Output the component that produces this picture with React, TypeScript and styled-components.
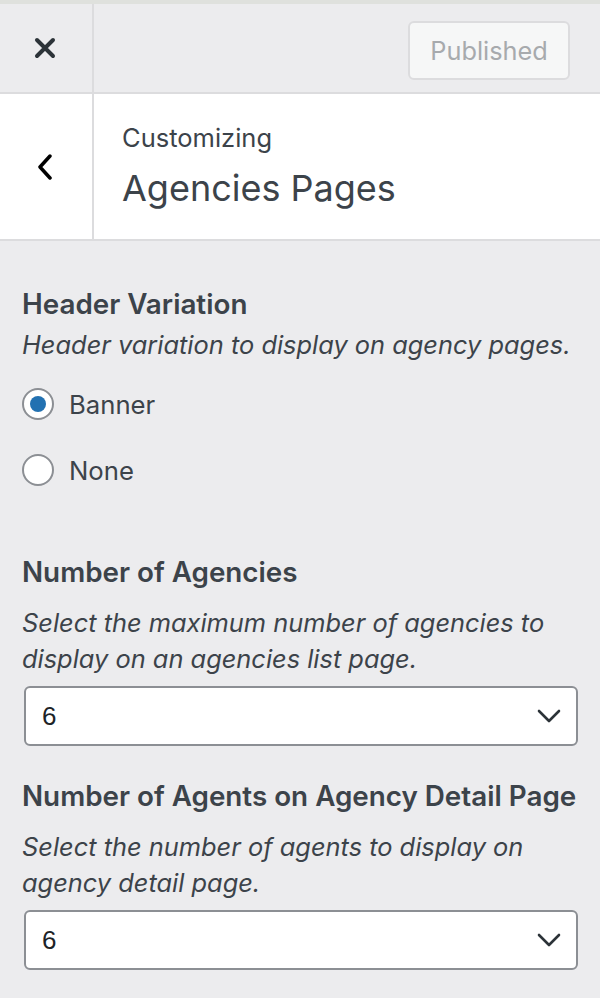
import React from "react";
import styled, { createGlobalStyle } from "styled-components";

const Global = createGlobalStyle`
  html, body { margin: 0; padding: 0; }
  body {
    background: #ececee;
    font-family: Inter, "Noto Sans", "Liberation Sans", sans-serif;
    color: #3c434a;
    -webkit-font-smoothing: antialiased;
  }
  * { box-sizing: border-box; }
`;

const Page = styled.div`
  width: 600px;
  min-height: 998px;
  background: #ececee;
  border-top: 4px solid #dfe1dd;
`;

const Header = styled.header`
  display: flex;
  align-items: stretch;
  height: 90px;
  border-bottom: 2px solid #dcdcde;
  background: #ececee;
`;

const IconCell = styled.div`
  width: 94px;
  flex: none;
  display: flex;
  align-items: center;
  justify-content: center;
  border-right: 2px solid #dcdcde;
  padding-right: 2px;
`;

const HeaderRight = styled.div`
  flex: 1;
  display: flex;
  align-items: flex-start;
  justify-content: flex-end;
  padding: 17px 30px 0 0;
`;

const PublishedButton = styled.button`
  width: 162px;
  height: 59px;
  border: 2px solid #dcdcde;
  border-radius: 6px;
  background: #f6f7f7;
  color: #a7aaad;
  font-family: inherit;
  font-size: 25.3px;
  padding: 0;
`;

const SectionTitle = styled.div`
  display: flex;
  align-items: stretch;
  height: 147px;
  background: #ffffff;
  border-bottom: 2px solid #dcdcde;
`;

const TitleText = styled.div`
  display: flex;
  flex-direction: column;
  justify-content: flex-start;
  padding: 28px 0 0 28px;
`;

const Eyebrow = styled.span`
  font-size: 25.5px;
  color: #3c434a;
  line-height: 32px;
`;

const Title = styled.h2`
  margin: 12px 0 0;
  font-size: 36px;
  font-weight: 400;
  color: #3c434a;
  line-height: 44px;
`;

const Content = styled.div`
  padding: 46px 22px 0 22px;
`;

const Control = styled.div`
  margin-bottom: 33px;
  &:last-child { margin-bottom: 0; }
`;

const ControlTitle = styled.h3`
  margin: 0;
  font-size: 27.8px;
  font-weight: 600;
  line-height: 34px;
  color: #3c434a;
  white-space: nowrap;
`;

const Description = styled.p<{ $gap: number }>`
  margin: ${(p) => p.$gap}px 0 0;
  font-size: 25.4px;
  font-style: italic;
  line-height: 36px;
  color: #3c434a;
`;

const RadioList = styled.div`
  display: flex;
  flex-direction: column;
  gap: 34px;
  margin-top: 25px;
  padding-bottom: 36px;
`;

const RadioRow = styled.label`
  display: flex;
  align-items: center;
  gap: 15px;
  font-size: 25.7px;
  color: #3c434a;
  height: 32px;
`;

const RadioCircle = styled.span<{ $checked?: boolean }>`
  width: 32px;
  height: 32px;
  border-radius: 50%;
  border: 2px solid #8c8f94;
  background: #ffffff;
  display: flex;
  align-items: center;
  justify-content: center;
  flex: none;
  &::after {
    content: "";
    width: 16px;
    height: 16px;
    border-radius: 50%;
    background: ${(p) => (p.$checked ? "#2271b1" : "transparent")};
  }
`;

const Select = styled.div`
  margin: 9px 0 0 2px;
  height: 60px;
  border: 2px solid #8c8f94;
  border-radius: 6px;
  background: #ffffff;
  display: flex;
  align-items: center;
  justify-content: space-between;
  padding: 0 15px 0 16px;
  font-size: 26px;
  color: #1d2327;
  font-family: "Liberation Sans", Arial, sans-serif;
`;

const CloseIcon = () => (
  <svg width="22" height="22" viewBox="0 0 22 22">
    <path d="M3 3 L19 19 M19 3 L3 19" stroke="#2c3338" strokeWidth="4" strokeLinecap="round" />
  </svg>
);

const BackIcon = () => (
  <svg width="16" height="26" viewBox="0 0 16 26">
    <path d="M13 2 L3 13 L13 24" fill="none" stroke="#000" strokeWidth="3.5" strokeLinecap="round" strokeLinejoin="round" />
  </svg>
);

const Chevron = () => (
  <svg width="24" height="14" viewBox="0 0 24 14">
    <path d="M2 2 L12 12 L22 2" fill="none" stroke="#2c3338" strokeWidth="2.6" strokeLinecap="round" strokeLinejoin="round" />
  </svg>
);

export default function App() {
  return (
    <>
      <Global />
      <Page>
        <Header>
          <IconCell>
            <CloseIcon />
          </IconCell>
          <HeaderRight>
            <PublishedButton>Published</PublishedButton>
          </HeaderRight>
        </Header>
        <SectionTitle>
          <IconCell>
            <BackIcon />
          </IconCell>
          <TitleText>
            <Eyebrow>Customizing</Eyebrow>
            <Title>Agencies Pages</Title>
          </TitleText>
        </SectionTitle>
        <Content>
          <Control>
            <ControlTitle>Header Variation</ControlTitle>
            <Description $gap={6}>Header variation to display on agency pages.</Description>
            <RadioList>
              <RadioRow>
                <RadioCircle $checked />
                Banner
              </RadioRow>
              <RadioRow>
                <RadioCircle />
                None
              </RadioRow>
            </RadioList>
          </Control>
          <Control>
            <ControlTitle>Number of Agencies</ControlTitle>
            <Description $gap={16}>Select the maximum number of agencies to display on an agencies list page.</Description>
            <Select>
              <span>6</span>
              <Chevron />
            </Select>
          </Control>
          <Control>
            <ControlTitle>Number of Agents on Agency Detail Page</ControlTitle>
            <Description $gap={16}>Select the number of agents to display on agency detail page.</Description>
            <Select>
              <span>6</span>
              <Chevron />
            </Select>
          </Control>
        </Content>
      </Page>
    </>
  );
}
